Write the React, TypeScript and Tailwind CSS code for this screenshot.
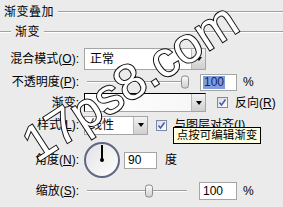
import React from 'react';

const cjk = { fontFamily: '"Liberation Sans", "Noto Sans CJK SC", sans-serif' };

function Label({ text, hot }: { text: string; hot?: string }) {
  return (
    <div className="w-[79px] mr-[1px] shrink-0 text-right text-[12px] leading-none text-black whitespace-nowrap">
      {text}
      {hot && (
        <>
          (<span className="underline underline-offset-1">{hot}</span>)
        </>
      )}
      :
    </div>
  );
}

function Arrow() {
  return (
    <div className="w-[14px] h-full flex items-center justify-center bg-gradient-to-b from-[#f2f2f2] to-[#cfcfcf] border-l border-[#b8b8b8]">
      <div className="w-0 h-0 border-l-[3px] border-r-[3px] border-t-[4px] border-l-transparent border-r-transparent border-t-black" />
    </div>
  );
}

function Check() {
  return (
    <div className="w-[11px] h-[11px] border border-[#7a8aa8] bg-gradient-to-br from-[#dcdcdc] to-white flex items-center justify-center shrink-0">
      <svg width="9" height="9" viewBox="0 0 9 9">
        <path d="M1.5 4.5 L3.5 7 L7.5 1.5" stroke="#4a5ab8" strokeWidth="1.6" fill="none" />
      </svg>
    </div>
  );
}

function Slider({ pos }: { pos: number }) {
  return (
    <div className="relative w-[100px] h-full">
      <div className="absolute left-0 right-0 top-1/2 h-[2px] -translate-y-1/2 border-t border-[#a0a0a0] border-b border-b-white" />
      <div
        className="absolute top-1/2 -translate-y-1/2 w-[8px] h-[13px] rounded-[3px] border border-[#8c8c8c] bg-gradient-to-b from-[#fafafa] to-[#d0d0d0]"
        style={{ left: pos }}
      />
    </div>
  );
}

export default function App() {
  return (
    <div className="relative w-[283px] h-[207px] overflow-hidden bg-[#ebebeb] text-black" style={cjk}>
      {/* title */}
      <div className="h-[24px] flex items-center pl-[4px] gap-[4px]">
        <span className="text-[12px] tracking-[0.5px] leading-none">渐变叠加</span>
        <div className="flex-1 h-[2px] border-t border-[#a0a0a0] border-b border-b-white" />
      </div>
      {/* group */}
      <div className="h-[16px] flex items-center gap-[4px]">
        <div className="w-[11px] h-[2px] border-t border-[#a0a0a0] border-b border-b-white" />
        <span className="text-[12px] tracking-[0.5px] leading-none">渐变</span>
        <div className="flex-1 h-[2px] border-t border-[#a0a0a0] border-b border-b-white" />
      </div>

      <div className="flex flex-col">
        {/* blend mode */}
        <div className="mt-[8px] h-[22px] flex items-center gap-[4px]">
          <Label text="混合模式" hot="O" />
          <div className="w-[122px] h-[22px] flex bg-white border border-[#a5a5a5]">
            <div className="flex-1 flex items-center pl-[5px] text-[12px] leading-none">正常</div>
            <Arrow />
          </div>
        </div>
        {/* opacity */}
        <div className="mt-[4px] h-[16px] flex items-center gap-[4px]">
          <Label text="不透明度" hot="P" />
          <div className="pl-[3px] h-full flex items-center">
            <Slider pos={94} />
          </div>
          <div className="ml-[9px] w-[37px] h-[17px] bg-white border border-[#a5a5a5] flex items-center pl-[2px]">
            <span className="bg-[#7f9ed9] text-[#14246a] text-[12px] leading-[13px] px-[1px]">100</span>
          </div>
          <span className="ml-[2px] text-[12px] leading-none">%</span>
        </div>
        {/* gradient */}
        <div className="mt-[3px] h-[19px] flex items-center gap-[4px]">
          <Label text="渐变" />
          <div className="w-[122px] h-[19px] flex bg-white border border-black border-r-[#a5a5a5] border-b-[#a5a5a5]">
            <div className="flex-1 bg-gradient-to-r from-white to-[#f7f7f7]" />
            <Arrow />
          </div>
          <div className="ml-[7px]"><Check /></div>
          <span className="ml-[3px] text-[12px] leading-none">
            反向(<span className="underline underline-offset-1">R</span>)
          </span>
        </div>
        {/* style */}
        <div className="mt-[4px] h-[18px] flex items-center gap-[4px]">
          <Label text="样式" hot="L" />
          <div className="w-[64px] h-[19px] flex bg-white border border-[#a5a5a5]">
            <div className="flex-1 flex items-center pl-[5px] text-[12px] leading-none">线性</div>
            <Arrow />
          </div>
          <div className="ml-[4px]"><Check /></div>
          <span className="ml-[3px] text-[12px] leading-none">
            与图层对齐(<span className="underline underline-offset-1">I</span>)
          </span>
        </div>
        {/* angle */}
        <div className="mt-[8px] h-[36px] flex items-center gap-[4px]">
          <Label text="角度" hot="N" />
          <div className="relative w-[36px] h-[36px] rounded-full border-2 border-[#5f6785] bg-gradient-to-br from-[#e2e2e2] to-white shrink-0">
            <div className="absolute left-1/2 top-[1px] w-[2px] h-[16px] -translate-x-1/2 bg-black" />
            <div className="absolute left-1/2 top-1/2 w-[4px] h-[4px] -translate-x-1/2 -translate-y-1/2 rounded-full bg-black" />
          </div>
          <div className="w-[33px] h-[17px] bg-white border border-[#a5a5a5] flex items-center pl-[3px] text-[12px] leading-none">90</div>
          <span className="ml-[4px] text-[12px] leading-none">度</span>
        </div>
        {/* scale */}
        <div className="mt-[4px] h-[18px] flex items-center gap-[4px]">
          <Label text="缩放" hot="S" />
          <div className="pl-[3px] h-full flex items-center">
            <Slider pos={58} />
          </div>
          <div className="ml-[8px] w-[38px] h-[18px] bg-white border border-[#a5a5a5] flex items-center pl-[3px] text-[12px] leading-none">100</div>
          <span className="ml-[2px] text-[12px] leading-none">%</span>
        </div>
      </div>

      {/* tooltip */}
      <div className="absolute left-[173px] top-[127px] w-[88px] h-[17px] bg-[#ffffe1] border border-black flex items-center justify-center text-[11.5px] leading-none whitespace-nowrap">
        点按可编辑渐变
      </div>

      {/* watermark */}
      <div
        className="absolute left-[130px] top-[82px] -translate-x-1/2 -translate-y-1/2 -rotate-[33deg] text-[50px] leading-none text-white whitespace-nowrap pointer-events-none [-webkit-text-stroke:2px_#111] [paint-order:stroke_fill]"
      >
        17ps8.com
      </div>
    </div>
  );
}
